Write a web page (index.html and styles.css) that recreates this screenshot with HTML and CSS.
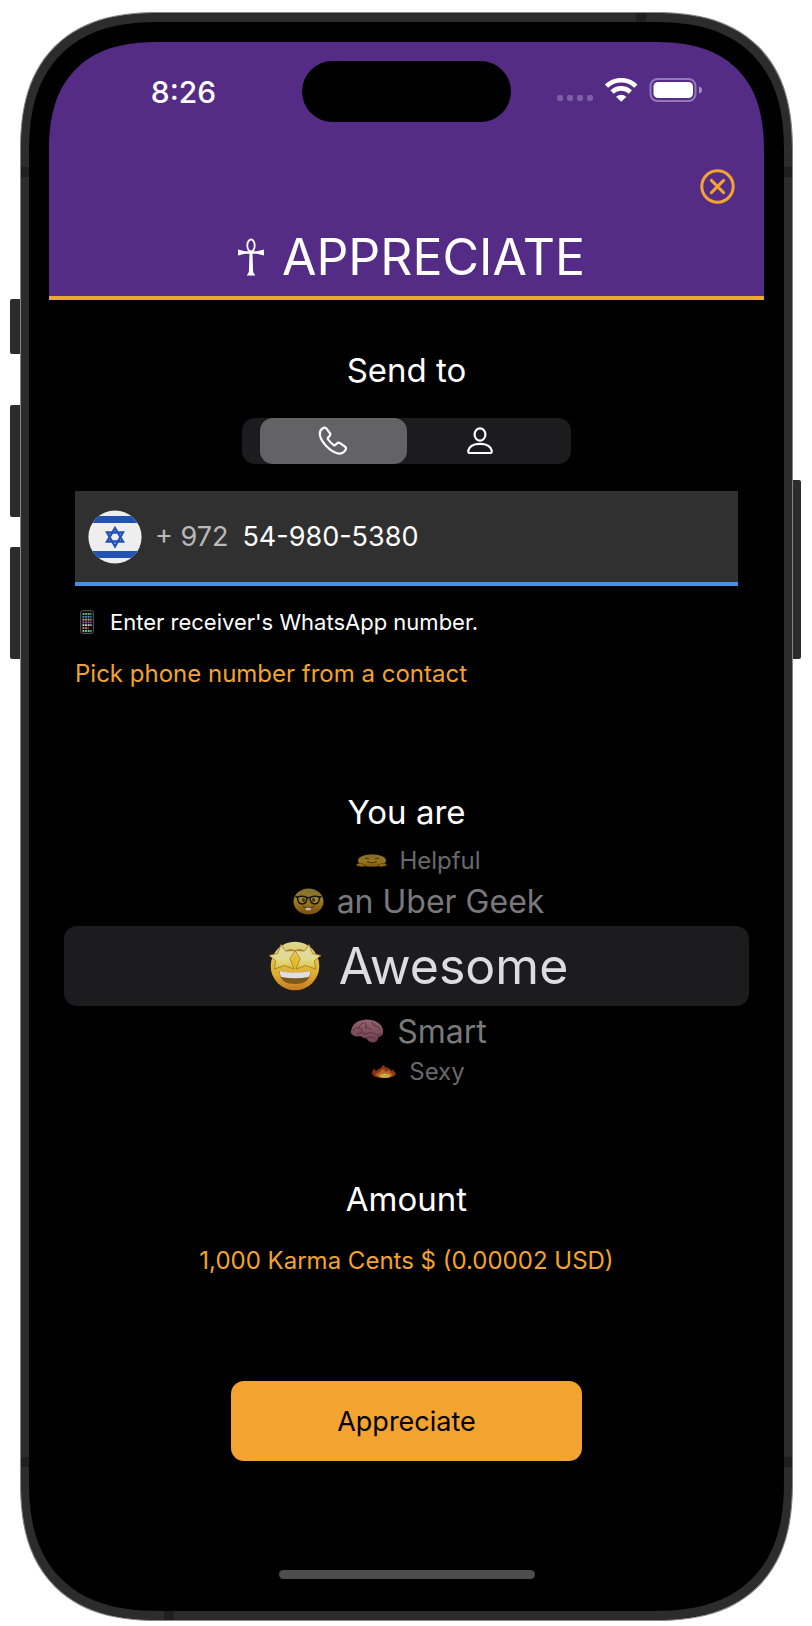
FILE: index.html
```html
<!DOCTYPE html>
<html lang="en">
<head>
<meta charset="utf-8">
<meta name="viewport" content="width=device-width, initial-scale=1">
<title>Appreciate</title>
<link rel="stylesheet" href="styles.css">
</head>
<body>
<div class="phone">
  <i class="key key-mute"></i><i class="key key-up"></i><i class="key key-down"></i><i class="key key-power"></i>
  <i class="seam seam-side seam-tl"></i><i class="seam seam-side seam-tr"></i>
  <i class="seam seam-side seam-bl"></i><i class="seam seam-side seam-br"></i>
  <i class="seam seam-edge seam-top"></i><i class="seam seam-edge seam-bottom"></i>
  <div class="bezel">
    <div class="screen">
      <header class="header">
        <div class="status">
          <span class="time">8:26</span>
          <span class="island"></span>
          <svg class="indicators" width="146" height="28" viewBox="0 0 146 28" aria-hidden="true">
            <g fill="#7e5fa5">
              <rect x="0" y="17" width="6" height="6" rx="2"/><rect x="10" y="17" width="6" height="6" rx="2"/>
              <rect x="20" y="17" width="6" height="6" rx="2"/><rect x="30" y="17" width="6" height="6" rx="2"/>
            </g>
            <g fill="none" stroke="#fff" stroke-width="4.6">
              <path d="M49.500 8.200a21 21 0 0 1 29.400 0"/>
              <path d="M55 14a13.400 13.400 0 0 1 18.400 0"/>
            </g>
            <path d="M59 18.800q5.200-4 10.400 0l-5.200 5z" fill="#fff"/>
            <rect x="93.500" y="1" width="45" height="22" rx="7" fill="none" stroke="#9379b5" stroke-width="2"/>
            <rect x="96.500" y="4" width="39.500" height="16" rx="4.500" fill="#fff"/>
            <path d="M142 8.500q3 1 3 3.500t-3 3.500z" fill="#a692c2"/>
          </svg>
        </div>
        <button class="close" type="button" aria-label="Close">
          <svg width="35" height="35" viewBox="0 0 35 35" fill="none" stroke="#f3a32f" stroke-width="3" stroke-linecap="round"><circle cx="17.500" cy="17.500" r="15.700"/><path d="M11.400 11.400l12.200 12.200M23.600 11.400L11.400 23.600"/></svg>
        </button>
        <h1 class="title">
          <svg width="26" height="38" viewBox="0 0 26 38" aria-hidden="true"><ellipse cx="13" cy="7.500" rx="3.700" ry="6" fill="none" stroke="#fff" stroke-width="1.800"/><path d="M0 11.500l7 1.700h12l7-1.700v6l-7-1.700h-4.500l.6 18.200 2.200 3.500H8.700l2.200-3.500.6-18.200H7l-7 1.700z" fill="#fff"/></svg>
          <span>APPRECIATE</span>
        </h1>
      </header>
      <main class="main">
        <section class="send">
          <h2 class="heading">Send to</h2>
          <div class="segment" role="radiogroup" aria-label="Send to">
            <label class="segment-item"><input class="choice" type="radio" name="target" aria-label="Phone" checked>
              <svg width="30" height="30" viewBox="0 0 30 30" fill="none" stroke="#fff" stroke-width="2.200" stroke-linejoin="round" stroke-linecap="round"><path d="M4.500 2.500C2 4 1.500 6 2 9.500c1.500 7 10.500 16.500 18 18 3.500.5 6-1 7.500-3.500.8-1.400.6-2.600-.7-3.500l-4.800-3.300c-1-.7-2-.6-2.900.2l-1.700 1.500c-.6.500-1.200.5-1.900 0-2.300-1.700-3.900-3.200-5.400-5.400-.5-.7-.5-1.300 0-1.900l1.500-1.700c.8-.9.9-1.900.2-2.900L8.500 2.700C7.500 1.300 6 1.400 4.500 2.500z"/></svg>
            </label>
            <label class="segment-item"><input class="choice" type="radio" name="target" aria-label="Contact">
              <svg width="26" height="28" viewBox="0 0 26 28" fill="none" stroke="#fff" stroke-width="2.200" stroke-linejoin="round"><ellipse cx="13" cy="7.500" rx="5.400" ry="6.200"/><path d="M3 26C1.500 26 1 25 1.300 23.600 2.300 19.500 6.500 16.800 13 16.800s10.700 2.700 11.700 6.800c.3 1.400-.2 2.400-1.700 2.400z"/></svg>
            </label>
          </div>
          <div class="field">
            <svg class="flag" width="54" height="54" viewBox="0 0 54 54" role="img" aria-label="Israel"><defs><clipPath id="disc"><circle cx="27" cy="27" r="26.600"/></clipPath></defs><g clip-path="url(#disc)"><path fill="#eee" d="M0 0h54v54H0z"/><path fill="#2253b4" d="M0 6h54v7H0zM0 41h54v7H0z"/></g><path d="M27 18l8 13.500H19zM27 36.500L19 22.500h16z" fill="none" stroke="#2253b4" stroke-width="2.300"/></svg>
            <span class="code">+ 972</span>
            <input class="number" type="tel" value="54-980-5380" aria-label="Receiver's WhatsApp number">
          </div>
          <p class="hint">
            <svg width="14" height="24" viewBox="0 0 14 24" aria-hidden="true"><rect x=".6" y=".6" width="12.800" height="22.800" rx="2" fill="#0c0c0e" stroke="#55555a"/><g stroke-width="1.800" stroke-dasharray="1.800 .8"><path stroke="#6cb86a" d="M2.500 4h9"/><path stroke="#4a8fd0" d="M2.500 6.800h9"/><path stroke="#d9b36a" d="M2.500 9.600h9"/><path stroke="#b04fc8" d="M2.500 12.400h9"/><path stroke="#e0e0e0" d="M2.500 15.200h9"/><path stroke="#d0723f" d="M2.500 18h6"/><path stroke="#69c9a0" d="M2.500 21h9"/></g></svg>
            <span>Enter receiver's WhatsApp number.</span>
          </p>
          <button class="link pick" type="button">Pick phone number from a contact</button>
        </section>
        <section class="trait">
          <h2 class="heading">You are</h2>
          <div class="wheel" role="radiogroup" aria-label="You are">
            <label class="row row-far"><input class="choice" type="radio" name="trait">
              <svg width="31" height="13" viewBox="0 0 31 13" aria-hidden="true"><defs><linearGradient id="hug" x2="0" y2="1"><stop stop-color="#7d6c2c"/><stop offset=".6" stop-color="#98761b"/><stop offset="1" stop-color="#7c5216"/></linearGradient></defs><ellipse cx="16" cy="6.500" rx="14" ry="6.300" fill="url(#hug)"/><path d="M9 5q2-1.600 4 0M19 5q2-1.600 4 0M11 7.600q5 2.600 10 0" fill="none" stroke="#46300b"/><path d="M0 11.500Q1 9 4 9.200l5 1.500q0 1.800-3 2zM31 11.500q-1-2.500-4-2.300l-5 1.500q0 1.800 3 2z" fill="#946a20" stroke="#443009" stroke-width=".5"/></svg>
              <span>Helpful</span></label>
            <label class="row row-near"><input class="choice" type="radio" name="trait">
              <svg width="31" height="27" viewBox="0 0 31 27" aria-hidden="true"><defs><linearGradient id="geek" x2="0" y2="1"><stop stop-color="#807033"/><stop offset=".5" stop-color="#a07c1c"/><stop offset="1" stop-color="#784b12"/></linearGradient></defs><ellipse cx="15.500" cy="13.500" rx="15" ry="13" fill="url(#geek)"/><g fill="#a08430" stroke="#101512" stroke-width="1.500"><path d="M4.500 9q5-1.500 9.500.5 0 6-4.500 6.500-5 0-5-7zM26.500 9q-5-1.500-9.500.5 0 6 4.500 6.500 5 0 5-7z"/><path d="M2.500 8.500l2 .5M14 10q1.500-1 3 0M26.500 9l2-.5" fill="none"/></g><ellipse cx="10.500" cy="12" rx="1.700" ry="2" fill="#503610"/><ellipse cx="20.500" cy="12" rx="1.700" ry="2" fill="#503610"/><path d="M9.500 18.500q6 3 12 0" fill="none" stroke="#523409"/><path d="M12.800 19.800h5v2.400h-5z" fill="#bbb"/></svg>
              <span>an Uber Geek</span></label>
            <label class="row row-current"><input class="choice" type="radio" name="trait" checked>
              <svg width="52" height="50" viewBox="0 0 52 50" aria-hidden="true"><defs><linearGradient id="face" x2="0" y2="1"><stop stop-color="#dcd69a"/><stop offset=".3" stop-color="#e4cb48"/><stop offset=".7" stop-color="#dda92f"/><stop offset="1" stop-color="#c07a20"/></linearGradient><linearGradient id="star" x2="0" y2="1"><stop stop-color="#dfdab0"/><stop offset=".6" stop-color="#e3d98e"/><stop offset="1" stop-color="#dfc23a"/></linearGradient></defs><circle cx="26" cy="25" r="24.300" fill="url(#face)"/><path d="M17.500 10q4-2.200 8.500 0 4.500-2.200 8.500 0" fill="none" stroke="#9c701f" stroke-width="1.300"/><path d="M26 13q-5 8 0 14 5-6 0-14z" fill="#e3bd28"/><g fill="url(#star)" stroke="#a9721f" stroke-width=".8" stroke-linejoin="round"><path d="M12 3.500l4.500 6.500 9.500-.500-5 8 4 10.500-9.500-3.500L5.500 28l1-8.500L0 14.500l8.500-2z"/><path d="M40 3.500L35.500 10l-9.500-.500 5 8L27 28l9.500-3.500 10 3.500-1-8.500 6.500-5-8.500-2z"/></g><path d="M10.500 30q15.500 3.500 31 0 0 13-15.500 13T10.500 30z" fill="#7d581b"/><path d="M10.800 30q15.200 3.200 30.400 0 .4 3.200-1.400 6-13.800 2.400-27.600 0-1.800-2.800-1.400-6z" fill="#dfdfe0"/></svg>
              <span>Awesome</span></label>
            <label class="row row-near"><input class="choice" type="radio" name="trait">
              <svg width="34" height="24" viewBox="0 0 34 24" aria-hidden="true"><defs><linearGradient id="brain" x2="0" y2="1"><stop stop-color="#946370"/><stop offset="1" stop-color="#6f3f4d"/></linearGradient></defs><path d="M1 12Q2 5 9 2q8-3 16 0 7 3 8 9 1 6-5 7.500 0 4-4.500 5-4 .5-7-4-4-.5-6-2.500-4 1-7-.500Q0 15 1 12z" fill="url(#brain)"/><path d="M3 12q1-4 6-3 0-4 5-5M9 9q4 1 3 4M15 3q3 3 0 6 4-1 7 2M22 3q0 3 4 4M25 7q4 0 5 4M7 15q5-3 8 0 6-3 10 0t6-1M16 19q4-2 9 0" fill="none" stroke="#56303c" stroke-width=".9"/></svg>
              <span>Smart</span></label>
            <label class="row row-far"><input class="choice" type="radio" name="trait">
              <svg width="25" height="13" viewBox="0 0 25 13" aria-hidden="true"><path d="M0 8q0-3 3-5-1 2 1 3 2-1 3-3 1 1 2 0 0-2 3-3 0 2 4 3 2 1 4 3l1-2q1 3 3 4 0 5-12 5T0 8z" fill="#8c3514"/><path d="M4 9q4-1 6-5 3 1 4 3l3-2q1 3 4 4-2 4-9 4T4 9z" fill="#b9691e"/><ellipse cx="13" cy="10.800" rx="5.500" ry="2.200" fill="#c4a950"/></svg>
              <span>Sexy</span></label>
          </div>
        </section>
        <section class="amount">
          <h2 class="heading">Amount</h2>
          <button class="link" type="button">1,000 Karma Cents $ (0.00002 USD)</button>
        </section>
        <button class="submit" type="button">Appreciate</button>
      </main>
      <div class="home"></div>
    </div>
  </div>
</div>
</body>
</html>
```
FILE: styles.css
```css
* { box-sizing: border-box; }
body {
  margin: 0;
  padding: 12px 19px 5px 20px;
  background: #fff;
  color: #fff;
  font-family: Inter, "Liberation Sans", sans-serif;
}
button, input { font: inherit; }
button { padding: 0; border: 0; background: none; cursor: pointer; }
svg { display: block; flex: none; }

/* Device */
.phone {
  position: relative;
  padding: 9px 8px;
  border: 1px solid #858585;
  border-radius: 118px;
  background: #2c2c2c;
}
.bezel { padding: 20px; border-radius: 110px; background: #000; }
.screen { overflow: hidden; border-radius: 90px; background: #000; }
@supports (corner-shape: superellipse(1.3)) {
  .phone, .bezel, .screen { corner-shape: superellipse(1.3); }
  .phone { border-radius: 140px; }
  .bezel { border-radius: 131px; }
  .screen { border-radius: 110px; }
}
.key { position: absolute; left: -11px; width: 10px; border-radius: 2px 0 0 2px; background: #2c2c2c; }
.key-mute { top: 286px; height: 55px; }
.key-up { top: 392px; height: 112px; }
.key-down { top: 534px; height: 112px; }
.key-power { top: 467px; right: -9px; left: auto; width: 8px; height: 179px; border-radius: 0 2px 2px 0; }
.seam { position: absolute; background: #1f1f1f; }
.seam-side { width: 8px; height: 10px; }
.seam-edge { width: 10px; height: 9px; }
.seam-tl { top: 154px; left: 0; }
.seam-tr { top: 154px; right: 0; }
.seam-bl { bottom: 153px; left: 0; }
.seam-br { right: 0; bottom: 153px; }
.seam-top { top: 0; right: 146px; }
.seam-bottom { bottom: 0; left: 143px; }

/* Header */
.header {
  display: flex;
  flex-direction: column;
  padding: 19px 16px 10px;
  border-bottom: 4px solid #eda92f;
  background: #542c86;
}
.status { display: grid; grid-template-columns: 1fr 209px 1fr; align-items: center; justify-items: center; }
.time { font-size: 30px; font-weight: 500; line-height: 36px; }
.island { width: 100%; height: 61px; border-radius: 31px; background: #000; }
.close { align-self: flex-end; margin: 47px 13px 24px 0; }
.title {
  display: flex;
  align-items: center;
  justify-content: center;
  gap: 18px;
  margin: 0;
  padding-left: 10px;
  font-size: 50px;
  font-weight: 400;
  line-height: 58px;
}

/* Content */
.main { display: flex; flex-direction: column; align-items: center; padding: 49px 15px 109px; }
.heading { margin: 0; font-size: 33px; font-weight: 400; line-height: 42px; text-align: center; }
.choice { position: absolute; opacity: 0; pointer-events: none; }
.link { color: #f3a32f; font-size: 24px; line-height: 30px; }

.send { display: flex; flex-direction: column; align-items: stretch; align-self: stretch; padding: 0 11px; }
.segment {
  display: flex;
  align-self: center;
  width: 329px;
  height: 46px;
  margin: 27px 0;
  padding: 0 18px;
  border-radius: 13px;
  background: #1c1c1e;
}
.segment-item { display: flex; flex: 1; align-items: center; justify-content: center; border-radius: 13px; }
.segment-item:has(:checked) { background: #636366; }
.field {
  display: flex;
  align-items: center;
  height: 95px;
  padding-left: 13px;
  border-bottom: 4px solid #468fe8;
  background: #303030;
  font-size: 27px;
}
.code { margin: 0 14px 0 13px; color: #b9b9b9; }
.number { flex: 1; min-width: 0; padding: 0; border: 0; outline: 0; background: none; color: #fff; }
.hint { display: flex; align-items: center; gap: 16px; margin: 21px 0 22px; padding-left: 5px; font-size: 22px; line-height: 30px; }
.pick { align-self: flex-start; }

.trait { align-self: stretch; margin-top: 102px; }
.wheel { margin-top: 12px; }
.row { display: flex; align-items: center; justify-content: center; padding-left: 24px; }
.row-far { gap: 12px; height: 31px; color: #69696b; font-size: 24px; }
.row-near { gap: 13px; height: 50px; color: #79797b; font-size: 32px; }
.row-current { gap: 18px; height: 80px; border-radius: 13px; background: #1c1c1e; color: #dddddf; font-size: 50px; }

.amount { display: flex; flex-direction: column; align-items: center; gap: 26px; margin-top: 91px; }
.submit { width: 351px; height: 80px; margin-top: 105px; border-radius: 13px; background: #f3a32f; color: #000; font-size: 27px; }
.home { width: 256px; height: 9px; margin: 0 auto 12px; border-radius: 5px; background: #4d4d4d; }
```
